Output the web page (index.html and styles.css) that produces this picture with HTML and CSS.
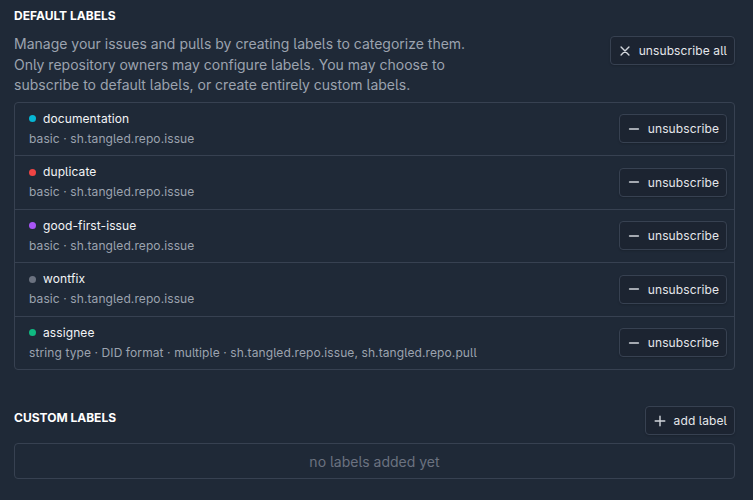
FILE: index.html
```html
<!DOCTYPE html>
<html>
<head>
<meta charset="utf-8">
<link rel="stylesheet" href="styles.css">
</head>
<body>
<div class="page">
  <section class="section">
    <h2 class="title">Default labels</h2>
    <div class="intro">
      <p class="desc">Manage your issues and pulls by creating labels to categorize them. Only repository owners may configure labels. You may choose to subscribe to default labels, or create entirely custom labels.</p>
      <button class="btn btn-top">
        <svg class="ico" viewBox="0 0 16 16" width="14" height="14"><path d="M3.5 3.5l9 9M12.5 3.5l-9 9" stroke="currentColor" stroke-width="1.6" stroke-linecap="round" fill="none"/></svg>
        <span>unsubscribe all</span>
      </button>
    </div>
    <div class="list">
      <div class="row">
        <div class="info">
          <div class="name"><span class="dot dot-doc"></span>documentation</div>
          <div class="meta">basic · sh.tangled.repo.issue</div>
        </div>
        <button class="btn"><svg class="ico" viewBox="0 0 16 16" width="14" height="14"><path d="M3 8h10" stroke="currentColor" stroke-width="1.8" stroke-linecap="round" fill="none"/></svg><span>unsubscribe</span></button>
      </div>
      <div class="row">
        <div class="info">
          <div class="name"><span class="dot dot-dup"></span>duplicate</div>
          <div class="meta">basic · sh.tangled.repo.issue</div>
        </div>
        <button class="btn"><svg class="ico" viewBox="0 0 16 16" width="14" height="14"><path d="M3 8h10" stroke="currentColor" stroke-width="1.8" stroke-linecap="round" fill="none"/></svg><span>unsubscribe</span></button>
      </div>
      <div class="row">
        <div class="info">
          <div class="name"><span class="dot dot-gfi"></span>good-first-issue</div>
          <div class="meta">basic · sh.tangled.repo.issue</div>
        </div>
        <button class="btn"><svg class="ico" viewBox="0 0 16 16" width="14" height="14"><path d="M3 8h10" stroke="currentColor" stroke-width="1.8" stroke-linecap="round" fill="none"/></svg><span>unsubscribe</span></button>
      </div>
      <div class="row">
        <div class="info">
          <div class="name"><span class="dot dot-wf"></span>wontfix</div>
          <div class="meta">basic · sh.tangled.repo.issue</div>
        </div>
        <button class="btn"><svg class="ico" viewBox="0 0 16 16" width="14" height="14"><path d="M3 8h10" stroke="currentColor" stroke-width="1.8" stroke-linecap="round" fill="none"/></svg><span>unsubscribe</span></button>
      </div>
      <div class="row">
        <div class="info">
          <div class="name"><span class="dot dot-as"></span>assignee</div>
          <div class="meta">string type · DID format · multiple · sh.tangled.repo.issue, sh.tangled.repo.pull</div>
        </div>
        <button class="btn"><svg class="ico" viewBox="0 0 16 16" width="14" height="14"><path d="M3 8h10" stroke="currentColor" stroke-width="1.8" stroke-linecap="round" fill="none"/></svg><span>unsubscribe</span></button>
      </div>
    </div>
  </section>
  <section class="section custom">
    <div class="custom-head">
      <h2 class="title">Custom labels</h2>
      <button class="btn">
        <svg class="ico" viewBox="0 0 16 16" width="14" height="14"><path d="M8 2.5v11M2.5 8h11" stroke="currentColor" stroke-width="1.6" stroke-linecap="round" fill="none"/></svg>
        <span>add label</span>
      </button>
    </div>
    <div class="empty">no labels added yet</div>
  </section>
</div>
</body>
</html>
```

FILE: styles.css
```css
* { box-sizing: border-box; }
html, body {
  margin: 0;
  background: #1f2937;
}
body {
  font-family: Inter, "Noto Sans", sans-serif;
  font-feature-settings: "cv05" 1;
  color: #e5e7eb;
}
.page {
  padding: 8px 18px 20px 14px;
}
.title {
  margin: 0;
  font-size: 12px;
  line-height: 16px;
  font-weight: 700;
  text-transform: uppercase;
  color: #ffffff;
}
.intro {
  display: flex;
  justify-content: space-between;
  align-items: flex-start;
  margin-top: 10px;
}
.desc {
  margin: 0;
  max-width: 460px;
  font-size: 14px;
  line-height: 20.5px;
  color: #9ca3af;
}
.btn {
  display: inline-flex;
  align-items: center;
  gap: 7px;
  height: 29px;
  padding: 0 7px 0 7px;
  border: 1px solid #374151;
  border-radius: 4px;
  background: #1c2431;
  color: #e5e7eb;
  font-family: Inter, "Noto Sans", sans-serif;
  font-feature-settings: "cv05" 1;
  font-size: 12px;
  letter-spacing: 0.1px;
  box-shadow: 0 1px 2px rgba(0,0,0,0.15);
}
.btn .ico { color: #d1d5db; flex: none; }
.btn-top { margin-top: 2px; }
.list {
  margin-top: 6px;
  border: 1px solid #374151;
  border-radius: 4px;
}
.row {
  display: flex;
  align-items: center;
  justify-content: space-between;
  padding: 7px 7px 7.6px 14px;
  border-top: 1px solid #374151;
}
.row:first-child { border-top: none; }
.name {
  display: flex;
  align-items: center;
  gap: 7px;
  font-size: 12px;
  letter-spacing: 0.1px;
  line-height: 18px;
  color: #f3f4f6;
}
.dot {
  width: 7px;
  height: 7px;
  border-radius: 50%;
  flex: none;
}
.dot-doc { background: #06b6d4; }
.dot-dup { background: #ef4444; }
.dot-gfi { background: #a855f7; }
.dot-wf { background: #6b7280; }
.dot-as { background: #10b981; }
.meta {
  margin-top: 2px;
  font-size: 12px;
  letter-spacing: 0.1px;
  line-height: 18px;
  color: #9ca3af;
}
.custom { margin-top: 36px; }
.custom-head {
  display: flex;
  justify-content: space-between;
  align-items: center;
}
.custom-head .title { margin-top: -6px; }
.empty {
  margin-top: 8px;
  height: 36px;
  border: 1px solid #374151;
  border-radius: 4px;
  display: flex;
  align-items: center;
  justify-content: center;
  font-size: 14px;
  color: #6b7280;
}
```
